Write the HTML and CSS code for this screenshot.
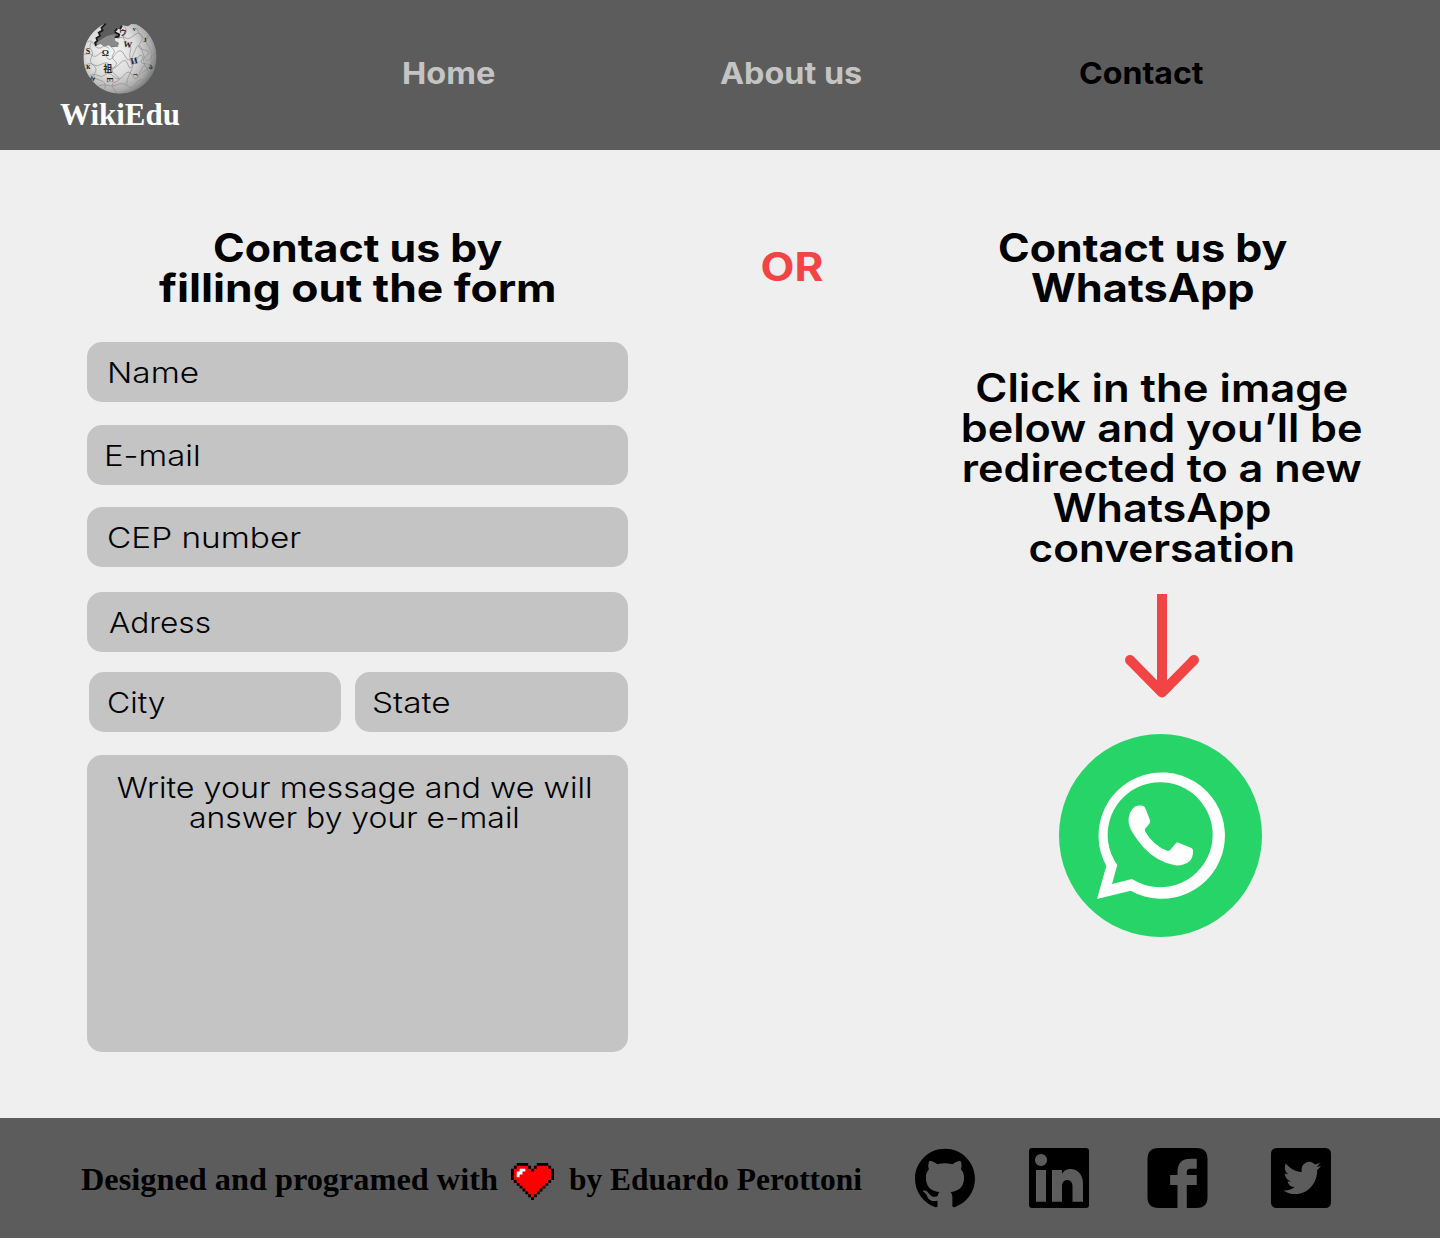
FILE: index.html
```html
<!DOCTYPE html>
<html lang="en">
<head>
<meta charset="utf-8">
<title>WikiEdu - Contact</title>
<link rel="stylesheet" href="styles.css">
</head>
<body>
<header class="top">
  <a class="brand">
    <svg class="globe" viewBox="0 0 240 231">
      <defs>
        <radialGradient id="ball" cx=".38" cy=".42" r=".68">
          <stop offset="0" stop-color="#f6f6f6"/><stop offset=".5" stop-color="#dcdcdc"/><stop offset=".8" stop-color="#aaa"/><stop offset="1" stop-color="#666"/>
        </radialGradient>
        <clipPath id="shell"><path d="M77 10L64 24 68 31 56 38 60 47 49 54 52 62 45 68 48 77 62 72 72 80 86 76 94 82 114 80 116 68 106 62 104 52 116 50 118 42 104 36 112 26 120 28 126 16 144 19 154 12 170 13A110 110 0 1 1 77 10z"/></clipPath>
      </defs>
      <path fill="#8a8a8a" d="M52 66L80 48 106 42 116 80 50 80z"/>
      <g clip-path="url(#shell)">
        <circle cx="119" cy="111" r="111" fill="url(#ball)"/>
        <g class="seams">
          <path d="M22 66q14-8 18 4t14 14 14-4 20 6M9 104q20-6 28 2t20-4 22 8 26-6 30 4 28-12 26 4 36-6"/>
          <path d="M12 138q18-12 28-4t26-2 24 6 28-6 26 2 24-12 24 4 32-14M24 172q14-14 28-6t24-2 26 6 30-4 26 2 24-14 22 0 18-10"/>
          <path d="M48 202q20-12 34-6t30-2 30 4 26-8 28-4M34 66q-8 16 0 24t0 22 6 24 4 24 14 20 16 26M94 82q14 10 6 20t4 20-2 20 6 24-2 20 6 34"/>
          <path d="M134 20q10 14 0 24t6 22 12 24-2 24 6 20-6 26-10 34M170 24q6 18 14 24t-4 22 14 20 0 22 6 20-14 26M206 50q-12 12-6 20t12 20 2 22 4 20M112 56q18-8 26-2t24-8 24 2 24-8"/>
        </g>
      </g>
      <path class="rim" d="M77 11L64 24 68 31 56 38 60 47 49 54 52 62 45 68 48 77M104 36L118 43 116 50 104 52M112 26L104 35M126 17L120 28"/>
      <g class="glyphs">
        <text x="65" y="108" font-size="27">Ω</text>
        <text x="130" y="82" font-size="26" transform="rotate(8 142 74)">W</text>
        <text x="152" y="132" font-size="27" transform="rotate(-12 160 124)">И</text>
        <text x="70" y="156" font-size="27">祖</text>
        <text x="17" y="102" font-size="24">S</text>
        <text x="19" y="146" font-size="22">к</text>
        <text x="30" y="180" font-size="22" transform="rotate(30 36 176)">м</text>
        <text x="80" y="194" font-size="24" transform="rotate(90 92 184)">E</text>
        <text x="118" y="45" font-size="22">ウ</text>
        <text x="158" y="172" font-size="26" transform="rotate(-10 168 164)">¬</text>
        <text x="208" y="148" font-size="20">ა</text>
        <text x="190" y="66" font-size="20">J</text>
        <text x="158" y="32" font-size="18">v</text>
      </g>
    </svg>
    <span class="brand-name">WikiEdu</span>
  </a>
  <nav class="menu">
    <a class="home">Home</a>
    <a class="about">About us</a>
    <a class="contact">Contact</a>
  </nav>
</header>

<main class="content">
  <section class="form-side">
    <h1 class="title"><span class="t1">Contact us by</span><span class="t2">filling out the form</span></h1>
    <form class="fields">
      <div class="field name"><span>Name</span></div>
      <div class="field email"><span>E-mail</span></div>
      <div class="field cep"><span>CEP number</span></div>
      <div class="field adress"><span>Adress</span></div>
      <div class="pair">
        <div class="field city"><span>City</span></div>
        <div class="field state"><span>State</span></div>
      </div>
      <div class="message"><span class="m1">Write your message and we will</span><span class="m2">answer by your e-mail</span></div>
    </form>
  </section>
  <div class="or">OR</div>
  <section class="chat-side">
    <h1 class="title"><span class="t1">Contact us by</span><span class="t3">WhatsApp</span></h1>
    <p class="hint"><span class="line-a">Click in the image</span><span>below and you’ll be</span><span>redirected to a new</span><span>WhatsApp</span><span class="line-e">conversation</span></p>
    <svg class="arrow" viewBox="0 0 74 104"><path d="M37 0V96M5 66L37 98.500 69 66" fill="none" stroke="#f24444" stroke-width="10" stroke-linejoin="round"/><circle cx="5" cy="66" r="5" fill="#f24444"/><circle cx="69" cy="66" r="5" fill="#f24444"/></svg>
    <svg class="whats" viewBox="0 0 203 203">
      <circle cx="101.500" cy="101.500" r="101.500" fill="#27d468"/>
      <path fill="#fff" fill-rule="evenodd" d="M47.300 132A63.200 63.200 0 1 1 71.700 156.700L38 165zM58.300 131L53 150 73 145A52.500 52.500 0 1 0 58.300 131z"/>
      <path fill="#fff" transform="translate(-9 -154) scale(.33333)" d="M256 679Q264 675 278 677Q283 678 286 685L300 720Q302 726 298 731L285 747Q283 750 286 755Q310 797 352 812Q357 814 361 809L376 791Q380 786 386 788L424 804Q430 807 429 812Q430 835 416 846Q398 858 375 856Q320 846 280 802Q240 755 236 729Q233 695 256 679z"/>
    </svg>
  </section>
</main>

<footer class="bottom">
  <p class="credit"><span class="c1">Designed and programed with</span>
    <svg class="heart" viewBox="0 0 15 13" preserveAspectRatio="none">
      <path d="M2 0h4v1h1v1h1V1h1V0h4v1h1v1h1v4h-1v1h-1v1h-1v1h-1v1h-1v1H9v1H8v1H7v-1H6v-1H5v-1H4V9H3V8H2V7H1V6H0V2h1V1h1z"/>
      <path fill="#f00" d="M2 1h4v1h1v1h1V2h1V1h4v1h1v4h-1v1h-1v1h-1v1h-1v1H9v1H8v1H7v-1H6v-1H5V9H4V8H3V7H2V6H1V2h1z"/>
      <path fill="#fff" d="M3 2h2v1H4v1H3v1H2V3h1z"/>
    </svg>
    <span class="c2">by Eduardo Perottoni</span></p>
  <div class="social">
    <svg class="github" viewBox="0 0 24 24"><path d="M12 .297c-6.630 0-12 5.373-12 12 0 5.303 3.438 9.800 8.205 11.385.6.113.82-.258.82-.577 0-.285-.01-1.040-.015-2.040-3.338.724-4.042-1.610-4.042-1.610C4.422 18.070 3.633 17.700 3.633 17.700c-1.087-.744.084-.729.084-.729 1.205.084 1.838 1.236 1.838 1.236 1.070 1.835 2.809 1.305 3.495.998.108-.776.417-1.305.76-1.605-2.665-.3-5.466-1.332-5.466-5.930 0-1.310.465-2.380 1.235-3.220-.135-.303-.54-1.523.105-3.176 0 0 1.005-.322 3.300 1.230.96-.267 1.980-.399 3-.405 1.020.006 2.040.138 3 .405 2.280-1.552 3.285-1.230 3.285-1.230.645 1.653.24 2.873.12 3.176.765.84 1.230 1.910 1.230 3.220 0 4.610-2.805 5.625-5.475 5.920.42.36.81 1.096.81 2.220 0 1.606-.015 2.896-.015 3.286 0 .315.21.69.825.57C20.565 22.092 24 17.592 24 12.297c0-6.627-5.373-12-12-12"/></svg>
    <svg class="linkedin" viewBox="0 0 60 60"><path fill-rule="evenodd" d="M3 0H57Q60 0 60 3V57Q60 60 57 60H3Q0 60 0 57V3Q0 0 3 0zM7 22V53.700H17V22zM12 6a6 6 0 1 0 .01 0zM23 22V53.700H33V38C33 30 43.500 30 43.500 38V53.700H54V36C54 18 36 18 33 26V22z"/></svg>
    <svg class="facebook" viewBox="0 0 60 60"><path fill-rule="evenodd" d="M11 0H49Q60 0 60 11V49Q60 60 49 60H39.300V37H49.300V27H39.300V24Q39.300 20.700 42.500 20.700H49.300V10.700H43Q30 10.700 30 24V27H22.600V37H30V60H11Q0 60 0 49V11Q0 0 11 0z"/></svg>
    <svg class="twitter" viewBox="0 0 60 60"><rect width="60" height="60" rx="5.500"/><path fill="#5c5c5c" transform="translate(12.300 10.200) scale(1.570 1.650)" d="M23.953 4.570a10 10 0 01-2.825.775 4.958 4.958 0 002.163-2.723c-.951.555-2.005.959-3.127 1.184a4.920 4.920 0 00-8.384 4.482C7.690 8.095 4.067 6.130 1.640 3.162a4.822 4.822 0 00-.666 2.475c0 1.710.87 3.213 2.188 4.096a4.904 4.904 0 01-2.228-.616v.06a4.923 4.923 0 003.946 4.827 4.996 4.996 0 01-2.212.085 4.936 4.936 0 004.604 3.417 9.867 9.867 0 01-6.102 2.105c-.39 0-.779-.023-1.170-.067a13.995 13.995 0 007.557 2.209c9.053 0 13.998-7.496 13.998-13.985 0-.21 0-.42-.015-.63A9.935 9.935 0 0024 4.590z"/></svg>
  </div>
</footer>
</body>
</html>
```

FILE: styles.css
```css
* { box-sizing: border-box; }
body { margin: 0; width: 1440px; height: 1238px; display: flex; flex-direction: column; background: #efefef; color: #000; font-family: "Inter", sans-serif; }
svg { display: block; flex: none; }
h1, p { margin: 0; }
span { white-space: nowrap; }

.top { height: 150px; display: flex; background: #5c5c5c; }
.brand { width: 240px; padding-top: 20px; display: flex; flex-direction: column; align-items: center; color: #fff; }
.globe { width: 80px; height: 77px; }
.seams { fill: none; stroke: #8c8c8c; stroke-width: 2; }
.rim { fill: none; stroke: #161616; stroke-width: 5; }
.glyphs { fill: #222; font-family: "Liberation Serif", "Noto Sans CJK JP", serif; font-weight: 700; }
.brand-name { font: 700 32px/34px "Liberation Serif", serif; transform: scaleX(.967); }
.menu { display: flex; padding-top: 58px; font-size: 30px; line-height: 30px; font-weight: 700; color: #c4c4c4; }
.menu a { white-space: nowrap; transform-origin: left; }
.home { margin-left: 162px; width: 318px; transform: scaleX(1.085); }
.about { width: 359px; transform: scaleX(1.077); }
.contact { color: #000; transform: scaleX(1.07); }

.content { height: 968px; display: flex; }
.form-side { width: 541px; margin-left: 87px; padding-top: 78px; }
.title, .hint, .message { display: flex; flex-direction: column; align-items: center; }
.title { font-size: 39px; line-height: 40px; font-weight: 700; }
.t1 { transform: scaleX(1.099); }
.t2 { transform: scaleX(1.138); }
.t3 { transform: scaleX(1.11); }
.fields { margin-top: 34px; font-size: 29px; line-height: 30px; font-weight: 300; }
.field { height: 60px; border-radius: 15px; background: #c4c4c4; padding: 16px 20px 0; }
.field span { display: inline-block; transform-origin: left; transform: scaleX(1.15); }
.email { margin-top: 23px; padding-left: 17px; }
.field.email span { transform: scaleX(1.135); }
.cep { margin-top: 22px; }
.adress { margin-top: 25px; padding-left: 22px; }
.field.adress span { transform: scaleX(1.09); }
.pair { display: flex; gap: 14px; margin: 20px 0 23px 2px; }
.city { width: 252px; padding-left: 18px; }
.field.city span { transform: scaleX(1.1); }
.state { width: 273px; padding-left: 17px; }
.message { height: 297px; border-radius: 15px; background: #c4c4c4; padding: 18px 6px 0 0; }
.m1 { transform: scaleX(1.113); }
.m2 { transform: scaleX(1.1); }
.or { width: 164px; margin-left: 82px; padding-top: 97px; font-size: 39px; line-height: 40px; font-weight: 700; color: #f24444; text-align: center; transform: scaleX(1.13); }
.chat-side { width: 402px; margin-left: 87px; padding-top: 78px; display: flex; flex-direction: column; align-items: center; }
.chat-side .title { margin-right: 39px; }
.hint { margin-top: 60px; font-size: 39px; line-height: 40px; font-weight: 600; }
.hint span { transform: scaleX(1.106); }
.hint .line-a { transform: scaleX(1.118); }
.hint .line-e { transform: scaleX(1.085); }
.arrow { width: 74px; height: 104px; margin-top: 26px; }
.whats { width: 203px; height: 203px; margin: 36px 3px 0 0; }

.bottom { height: 120px; display: flex; background: #5c5c5c; }
.credit { flex: none; width: 867px; padding: 44px 0 0 81px; display: flex; font: 700 32px/34px "Liberation Serif", serif; }
.c1, .c2 { transform-origin: left; }
.c1 { flex: none; width: 430px; transform: scaleX(1.01); }
.c2 { transform: scaleX(.983); }
.heart { width: 43px; height: 37px; margin-top: 1px; margin-right: 15px; }
.social { display: flex; padding-top: 30px; }
.social svg { width: 60px; height: 60px; }
.social .github { margin-left: 48px; margin-right: 54px; }
.social .linkedin { margin-right: 58px; }
.social .facebook { width: 61px; margin-right: 63px; }
```
